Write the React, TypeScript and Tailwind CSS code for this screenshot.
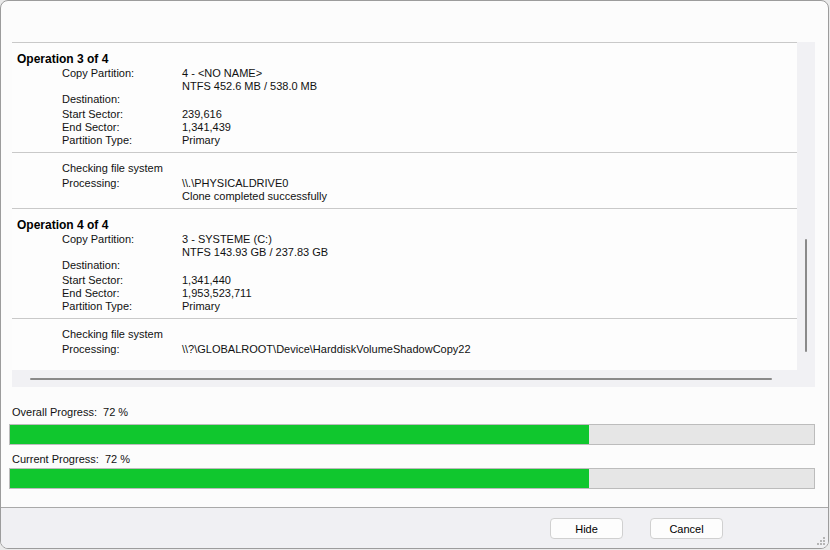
import React from "react";

type Row = { label?: string; value?: string; gap?: boolean; plain?: string };

const font = { fontFamily: '"Liberation Sans", Arial, sans-serif' };

function Rows({ rows }: { rows: Row[] }) {
  return (
    <div className="flex flex-col">
      {rows.map((r, i) => (
        <div
          key={i}
          className={`flex h-[13px] leading-[13px] text-[11px] text-[#111] pl-[50px] ${r.gap ? "mt-[2px]" : ""}`}
        >
          {r.plain !== undefined ? (
            <span className="whitespace-pre">{r.plain}</span>
          ) : (
            <>
              <span className="w-[120px] shrink-0 whitespace-pre">{r.label ?? ""}</span>
              <span className="whitespace-pre">{r.value ?? ""}</span>
            </>
          )}
        </div>
      ))}
    </div>
  );
}

function OpSection({
  title,
  name,
  fs,
  start,
  end,
}: {
  title: string;
  name: string;
  fs: string;
  start: string;
  end: string;
}) {
  return (
    <div className="pt-[9px] pb-[5px] border-b border-[#c9c9c9]">
      <div className="h-[15px] leading-[15px] text-[12px] font-bold text-black pl-[5px]">{title}</div>
      <Rows
        rows={[
          { label: "Copy Partition:", value: name },
          { label: "", value: fs },
          { label: "Destination:", value: "" },
          { label: "Start Sector:", value: start, gap: true },
          { label: "End Sector:", value: end },
          { label: "Partition Type:", value: "Primary" },
        ]}
      />
    </div>
  );
}

function Bar({ pct }: { pct: number }) {
  return (
    <div className="ml-[8px] w-[806px] h-[21px] border border-[#bcbcbc] bg-[#e6e6e6]">
      <div className="h-full bg-[#10c72e]" style={{ width: `${pct}%` }} />
    </div>
  );
}

export default function App() {
  return (
    <div className="w-[830px] h-[550px] bg-[#eaeaea]" style={font}>
      <div className="w-[829px] h-[549px] border border-[#9c9c9c] rounded-[8px] bg-[#fcfcfc] overflow-hidden flex flex-col">
        {/* scroll box */}
        <div className="mt-[41px] ml-[11px] w-[803px] h-[345px] bg-[#f1f1f4] flex flex-col shrink-0">
          <div className="flex h-[328px]">
            <div className="w-[785px] h-full bg-[#fdfdfd] border-t border-[#c9c9c9] overflow-hidden">
              <OpSection
                title="Operation 3 of 4"
                name="4 - <NO NAME>"
                fs="NTFS 452.6 MB / 538.0 MB"
                start="239,616"
                end="1,341,439"
              />
              <div className="pt-[9px] pb-[5px] border-b border-[#c9c9c9]">
                <Rows
                  rows={[
                    { plain: "Checking file system" },
                    { label: "Processing:", value: "\\\\.\\PHYSICALDRIVE0", gap: true },
                    { label: "", value: "Clone completed successfully" },
                  ]}
                />
              </div>
              <OpSection
                title="Operation 4 of 4"
                name="3 - SYSTEME (C:)"
                fs="NTFS 143.93 GB / 237.83 GB"
                start="1,341,440"
                end="1,953,523,711"
              />
              <div className="pt-[9px]">
                <Rows
                  rows={[
                    { plain: "Checking file system" },
                    {
                      label: "Processing:",
                      value: "\\\\?\\GLOBALROOT\\Device\\HarddiskVolumeShadowCopy22",
                      gap: true,
                    },
                  ]}
                />
              </div>
            </div>
            <div className="flex-1 flex justify-center pt-[197px]">
              <div className="w-[2px] h-[113px] bg-[#8a8a8a] rounded-full" />
            </div>
          </div>
          <div className="h-[17px] pl-[18px] pt-[8px]">
            <div className="w-[742px] h-[2px] bg-[#8a8a8a] rounded-full" />
          </div>
        </div>

        {/* progress */}
        <div className="mt-[19px] pl-[11px] h-[13px] leading-[13px] text-[11px] text-[#111] whitespace-pre shrink-0">
          {"Overall Progress:  72 %"}
        </div>
        <div className="mt-[5px] shrink-0">
          <Bar pct={72} />
        </div>
        <div className="mt-[8px] pl-[11px] h-[13px] leading-[13px] text-[11px] text-[#111] whitespace-pre shrink-0">
          {"Current Progress:  72 %"}
        </div>
        <div className="mt-[2px] shrink-0">
          <Bar pct={72} />
        </div>
        <div className="flex-1" />

        {/* footer */}
        <div className="h-[41px] shrink-0 border-t border-[#a9a9a9] bg-[#f0f0f3] relative flex justify-end items-start pt-[10px] pr-[105px] gap-[27px]">
          <button className="w-[73px] h-[21px] bg-[#fdfdfd] border border-[#d0d0d0] rounded-[4px] text-[11px] leading-[20px] text-black">
            Hide
          </button>
          <button className="w-[73px] h-[21px] bg-[#fdfdfd] border border-[#d0d0d0] rounded-[4px] text-[11px] leading-[20px] text-black">
            Cancel
          </button>
          <svg className="absolute right-[2px] bottom-[2px]" width="10" height="10" viewBox="0 0 10 10">
            <rect x="7" y="1" width="2" height="2" fill="#b5b5b5" />
            <rect x="4" y="4" width="2" height="2" fill="#b5b5b5" />
            <rect x="7" y="4" width="2" height="2" fill="#b5b5b5" />
            <rect x="1" y="7" width="2" height="2" fill="#b5b5b5" />
            <rect x="4" y="7" width="2" height="2" fill="#b5b5b5" />
            <rect x="7" y="7" width="2" height="2" fill="#b5b5b5" />
          </svg>
        </div>
      </div>
    </div>
  );
}
